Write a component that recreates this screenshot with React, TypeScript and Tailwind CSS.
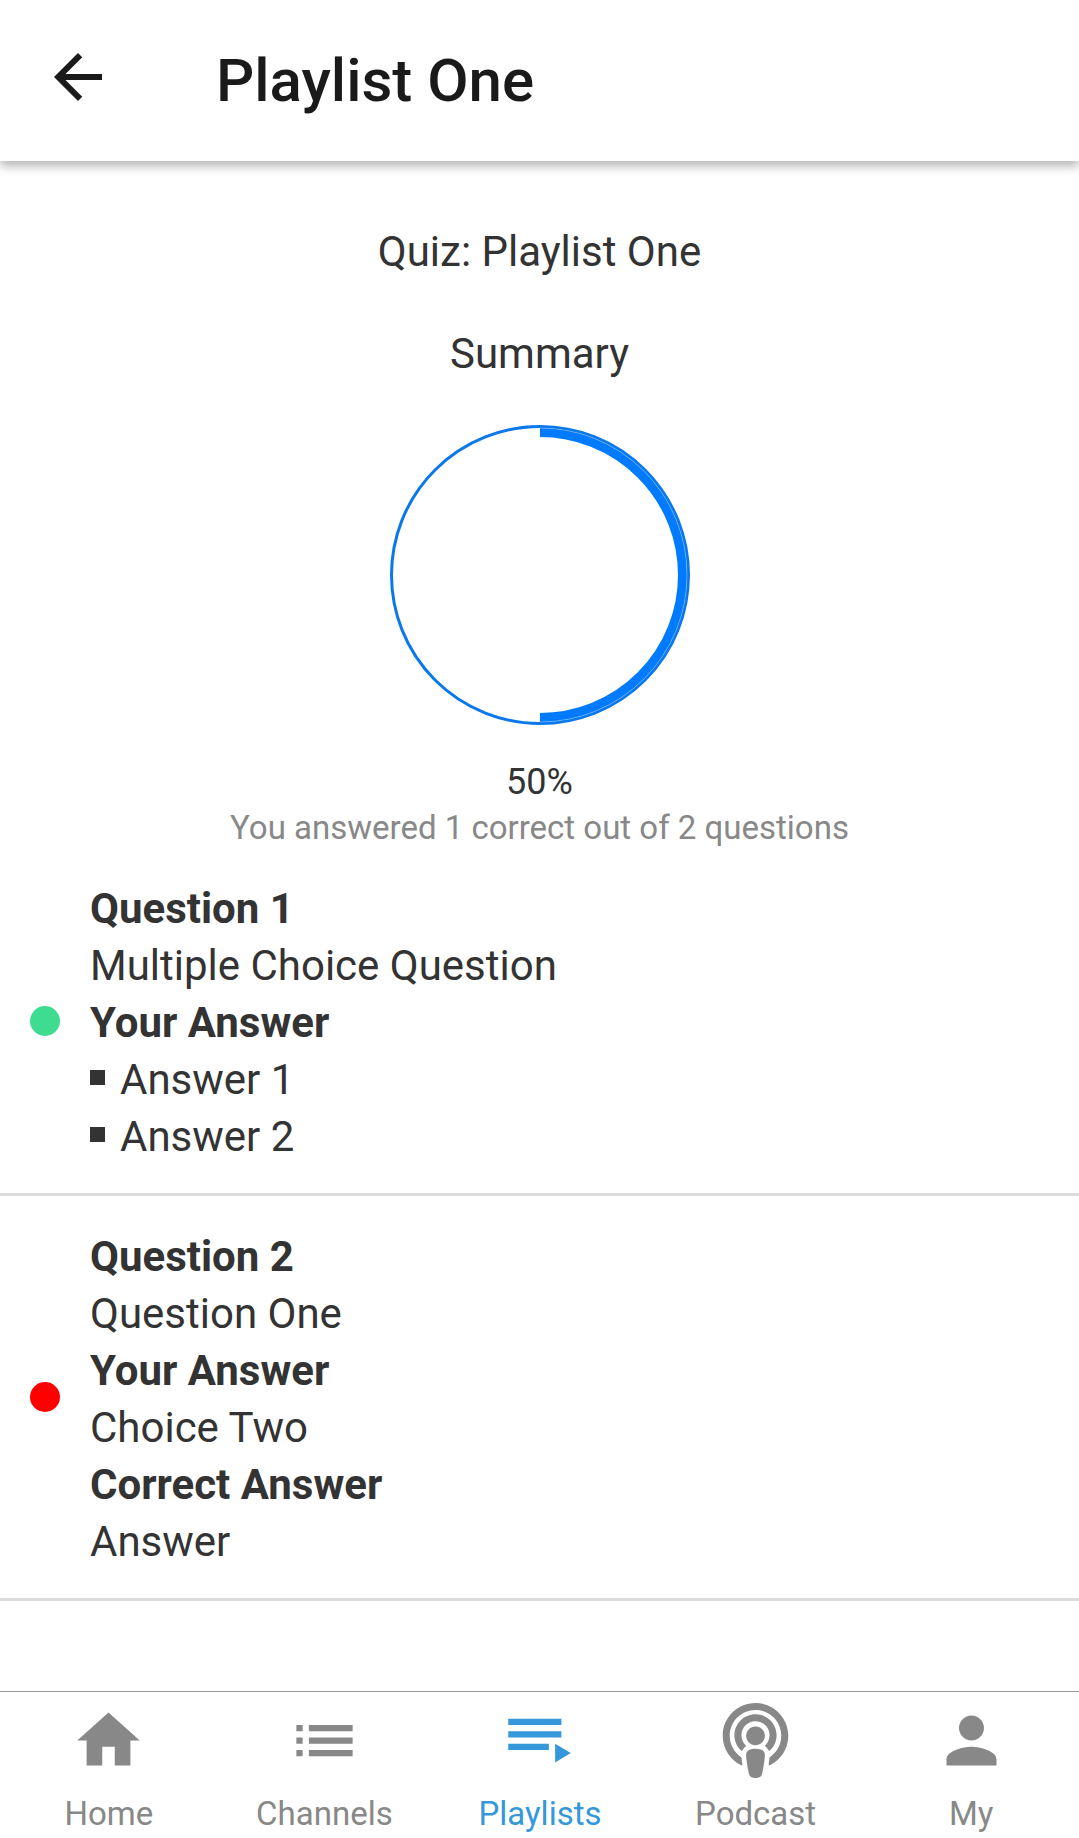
import { MdHome, MdList, MdPerson, MdArrowBack } from "react-icons/md";
import { FaPodcast } from "react-icons/fa";
import type { ReactNode } from "react";

type Section = { heading: string; lines: string[]; bulleted?: boolean };
type Result = { correct: boolean; sections: Section[] };

const results: Result[] = [
  {
    correct: true,
    sections: [
      { heading: "Question 1", lines: ["Multiple Choice Question"] },
      { heading: "Your Answer", lines: ["Answer 1", "Answer 2"], bulleted: true },
    ],
  },
  {
    correct: false,
    sections: [
      { heading: "Question 2", lines: ["Question One"] },
      { heading: "Your Answer", lines: ["Choice Two"] },
      { heading: "Correct Answer", lines: ["Answer"] },
    ],
  },
];

const tabs: { label: string; icon: ReactNode; active?: boolean }[] = [
  { label: "Home", icon: <MdHome className="size-[75px]" /> },
  { label: "Channels", icon: <MdList className="size-[75px]" /> },
  {
    label: "Playlists",
    active: true,
    icon: (
      <svg viewBox="0 0 24 24" fill="currentColor" className="size-[75px]" aria-hidden="true">
        <path d="M19 9H2v2h17V9zm0-4H2v2h17V5zM2 15h13v-2H2v2zm15-2v6l5-3-5-3z" />
      </svg>
    ),
  },
  { label: "Podcast", icon: <FaPodcast className="size-[75px]" /> },
  { label: "My", icon: <MdPerson className="size-[75px]" /> },
];

function ScoreRing() {
  return (
    <svg viewBox="0 0 300 300" className="size-[300px]" fill="none" role="img" aria-label="50% correct">
      <circle cx="150" cy="150" r="148.5" stroke="#0a78ea" strokeWidth="3" />
      <path d="M150 7.5a142.5 142.5 0 0 1 0 285" stroke="#007aff" strokeWidth="9" />
      <path d="M150 3a147 147 0 0 1 0 294" stroke="#8cc4ff" strokeWidth="0.5" />
    </svg>
  );
}

function ResultRow({ correct, sections }: Result) {
  return (
    <li className="flex items-center gap-[30px] border-b-3 border-[#dcdcdc] px-[30px] py-7">
      <span
        role="img"
        aria-label={correct ? "Correct" : "Incorrect"}
        className={`size-[30px] shrink-0 rounded-full ${correct ? "bg-[#3ddc91]" : "bg-[#ff0000]"}`}
      />
      <div className="flex-1 pt-1">
        {sections.map((s) => (
          <section key={s.heading}>
            <h3 className="font-bold">{s.heading}</h3>
            {s.bulleted ? (
              <ul>
                {s.lines.map((l) => (
                  <li key={l} className="flex items-center gap-[15px]">
                    <span className="mb-1 size-[15px] bg-[#333333]" />
                    {l}
                  </li>
                ))}
              </ul>
            ) : (
              s.lines.map((l) => <p key={l}>{l}</p>)
            )}
          </section>
        ))}
      </div>
    </li>
  );
}

export default function App() {
  return (
    <div className="flex min-h-screen flex-col bg-white font-['Roboto',sans-serif] text-[42px] leading-[57px] text-[#333333]">
      <header className="flex h-[161px] items-center gap-[102px] px-[42px] text-[#1a1a1a] shadow-[0_5px_10px_rgba(0,0,0,0.3)]">
        <button type="button" aria-label="Back" className="mb-2">
          <MdArrowBack className="size-[72px]" />
        </button>
        <h1 className="text-[60px] leading-[70px] font-medium">Playlist One</h1>
      </header>

      <main className="flex-1">
        <div className="flex flex-col items-center pt-[62px]">
          <h2>Quiz: Playlist One</h2>
          <h2 className="mt-[45px] mb-[43px]">Summary</h2>
          <ScoreRing />
          <p className="mt-9 text-[36px] leading-[42px]">50%</p>
          <p className="mt-[5px] mb-px text-[33px] leading-[39px] text-[#888888]">
            You answered 1 correct out of 2 questions
          </p>
        </div>
        <ul>
          {results.map((r) => (
            <ResultRow key={r.sections[0].heading} {...r} />
          ))}
        </ul>
      </main>

      <nav className="grid grid-cols-5 border-t border-[#9a9a9a] pt-[11px] pb-[5px] pl-px">
        {tabs.map((t) => (
          <a
            key={t.label}
            href="#"
            aria-current={t.active ? "page" : undefined}
            className={`flex flex-col items-center gap-4 text-[33px] leading-[39px] ${t.active ? "text-[#3498db]" : "text-[#888888]"}`}
          >
            {t.icon}
            {t.label}
          </a>
        ))}
      </nav>
    </div>
  );
}
